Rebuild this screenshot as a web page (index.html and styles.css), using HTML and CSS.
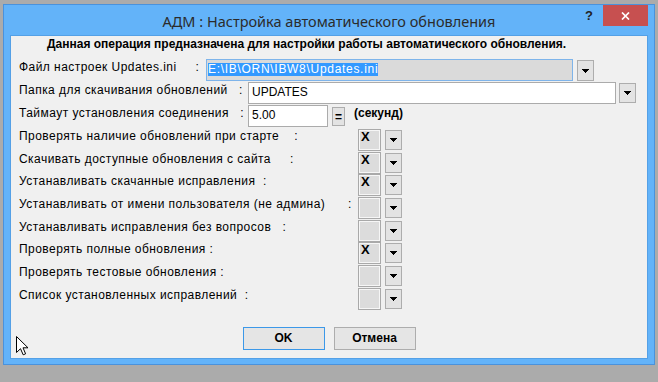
FILE: index.html
```html
<!DOCTYPE html>
<html>
<head>
    <title>АДМ : Настройка автоматического обновления</title>
    <link rel="stylesheet" href="styles.css">
</head>
<body>
    <div class="window">
        <div class="titlebar">
            <span></span>
            <span class="title">АДМ : Настройка автоматического обновления</span>
            <div class="caption">
                <span class="help">?</span>
                <span class="close">
                    <svg width="9" height="8" viewBox="0 0 9 8"><path d="M1 0.5 L8 7.5 M8 0.5 L1 7.5" stroke="#fff" stroke-width="1.7"/></svg>
                </span>
            </div>
        </div>

        <div class="client">
            <p class="intro">Данная операция предназначена для настройки работы автоматического обновления.</p>

            <div class="form">
                <div class="row">
                    <label class="label label-file">Файл настроек Updates.ini     :</label>
                    <div class="field field-file"><span class="selected">E:\IB\ORN\IBW8\Updates.ini</span></div>
                    <button class="drop drop-file"><svg width="7" height="4" viewBox="0 0 7 4"><path d="M0 0h7v1h-1v1h-1v1h-1v1h-1v-1h-1v-1h-1v-1h-1z"/></svg></button>
                </div>
                <div class="row">
                    <label class="label">Папка для скачивания обновлений   :</label>
                    <div class="field field-folder">UPDATES</div>
                    <button class="drop drop-folder"><svg width="7" height="4" viewBox="0 0 7 4"><path d="M0 0h7v1h-1v1h-1v1h-1v1h-1v-1h-1v-1h-1v-1h-1z"/></svg></button>
                </div>
                <div class="row">
                    <label class="label">Таймаут установления соединения   :</label>
                    <div class="field field-timeout">5.00</div>
                    <button class="calc">=</button>
                    <span class="unit">(секунд)</span>
                </div>

                <div class="checks">
                    <label class="check-label">Проверять наличие обновлений при старте    :</label>
                    <div class="box">X</div>
                    <button class="drop"><svg width="7" height="4" viewBox="0 0 7 4"><path d="M0 0h7v1h-1v1h-1v1h-1v1h-1v-1h-1v-1h-1v-1h-1z"/></svg></button>

                    <label class="check-label">Скачивать доступные обновления с сайта     :</label>
                    <div class="box">X</div>
                    <button class="drop"><svg width="7" height="4" viewBox="0 0 7 4"><path d="M0 0h7v1h-1v1h-1v1h-1v1h-1v-1h-1v-1h-1v-1h-1z"/></svg></button>

                    <label class="check-label">Устанавливать скачанные исправления  :</label>
                    <div class="box">X</div>
                    <button class="drop"><svg width="7" height="4" viewBox="0 0 7 4"><path d="M0 0h7v1h-1v1h-1v1h-1v1h-1v-1h-1v-1h-1v-1h-1z"/></svg></button>

                    <label class="check-label">Устанавливать от имени пользователя (не админа)      :</label>
                    <div class="box"></div>
                    <button class="drop"><svg width="7" height="4" viewBox="0 0 7 4"><path d="M0 0h7v1h-1v1h-1v1h-1v1h-1v-1h-1v-1h-1v-1h-1z"/></svg></button>

                    <label class="check-label">Устанавливать исправления без вопросов   :</label>
                    <div class="box"></div>
                    <button class="drop"><svg width="7" height="4" viewBox="0 0 7 4"><path d="M0 0h7v1h-1v1h-1v1h-1v1h-1v-1h-1v-1h-1v-1h-1z"/></svg></button>

                    <label class="check-label">Проверять полные обновления :</label>
                    <div class="box">X</div>
                    <button class="drop"><svg width="7" height="4" viewBox="0 0 7 4"><path d="M0 0h7v1h-1v1h-1v1h-1v1h-1v-1h-1v-1h-1v-1h-1z"/></svg></button>

                    <label class="check-label">Проверять тестовые обновления :</label>
                    <div class="box"></div>
                    <button class="drop"><svg width="7" height="4" viewBox="0 0 7 4"><path d="M0 0h7v1h-1v1h-1v1h-1v1h-1v-1h-1v-1h-1v-1h-1z"/></svg></button>

                    <label class="check-label">Список установленных исправлений  :</label>
                    <div class="box"></div>
                    <button class="drop"><svg width="7" height="4" viewBox="0 0 7 4"><path d="M0 0h7v1h-1v1h-1v1h-1v1h-1v-1h-1v-1h-1v-1h-1z"/></svg></button>
                </div>
            </div>

            <div class="actions">
                <button class="btn btn-default">OK</button>
                <button class="btn">Отмена</button>
            </div>

            <svg class="cursor" width="13" height="20" viewBox="0 0 13 20">
                <path d="M0.5 0.5 V16.5 L4.5 12.7 L7.2 18.8 L9.6 17.8 L7 11.8 H12 Z" fill="#fff" stroke="#000" stroke-width="1"/>
            </svg>
        </div>
    </div>
</body>
</html>
```

FILE: styles.css
```css
body {
    margin: 0;
    background-color: #ababab;
    font-family: "Liberation Sans", Arial, sans-serif;
    font-size: 12px;
    color: #000;
}

.window {
    width: 652px;
    margin: 4px 0 0 3px;
    box-sizing: border-box;
    background-color: #63b3f9;
    border: 1px solid #4a92dc;
    padding: 0 6px 5px 6px;
}

/* title bar */
.titlebar {
    display: grid;
    grid-template-columns: 1fr auto 1fr;
    height: 30px;
}

.title {
    font-family: "Noto Sans", sans-serif;
    font-size: 14.5px;
    line-height: 20px;
    color: #2b2b2b;
    margin-top: 6px;
    white-space: nowrap;
}

.caption {
    justify-self: end;
    display: flex;
    align-items: flex-start;
}

.help {
    font-weight: bold;
    font-size: 13px;
    line-height: 14px;
    color: #222;
    margin: 4px 10px 0 0;
}

.close {
    width: 45px;
    height: 21px;
    background-color: #c75050;
    display: flex;
    align-items: center;
    justify-content: center;
}

/* client area */
.client {
    position: relative;
    height: 322px;
    background-color: #f0f0f0;
    border: 1px solid #54a0e6;
}

.intro {
    margin: 1px 0 0 0;
    padding-left: 36px;
    font-weight: bold;
    line-height: 14px;
}

.form {
    margin-top: 8px;
    padding-left: 8px;
}

.row {
    display: flex;
    align-items: flex-start;
    height: 22px;
    margin-bottom: 1px;
}

.label,
.check-label {
    white-space: pre;
    line-height: 14px;
    letter-spacing: 0.45px;
}

.label {
    width: 229px;
    padding-top: 1px;
}

.label-file {
    width: 187px;
}

.field {
    box-sizing: border-box;
    height: 22px;
    border: 1px solid #ababab;
    background-color: #fff;
    padding: 2px 0 0 3px;
    line-height: 14px;
}

.field-file {
    width: 367px;
    background-color: #dadada;
    border-color: #7eb4ea;
    padding: 2px 0 0 1px;
}

.selected {
    display: inline-block;
    line-height: 13px;
    background-color: #3399ff;
    color: #fff;
    letter-spacing: 0.7px;
}

.field-folder {
    width: 368px;
}

.field-timeout {
    width: 80px;
}

.drop,
.calc {
    box-sizing: border-box;
    padding: 0;
    border: 1px solid #adadad;
    background-color: #e3e3e3;
    display: flex;
    align-items: center;
    justify-content: center;
}

.drop {
    width: 17px;
    height: 20px;
}

.drop-file {
    height: 21px;
    margin: 1px 0 0 4px;
}

.drop-folder {
    margin: 1px 0 0 3px;
}

.calc {
    width: 13px;
    height: 19px;
    margin: 2px 0 0 4px;
    font-family: "Liberation Sans", Arial, sans-serif;
    font-weight: bold;
    font-size: 12px;
}

.unit {
    margin-left: 9px;
    padding-top: 1px;
    line-height: 14px;
    font-weight: bold;
}

/* option rows */
.checks {
    margin-top: 2px;
    display: grid;
    grid-template-columns: 335px 23px 17px;
    grid-auto-rows: 22px;
    column-gap: 4px;
    row-gap: 0.7px;
    align-items: center;
}

.check-label {
    align-self: start;
}

.box {
    box-sizing: border-box;
    height: 22px;
    border: 1px solid #a9a9a9;
    box-shadow: inset 0 0 0 1px #f6f6f6;
    background-color: #dcdcdc;
    padding-left: 2px;
    font-weight: bold;
    font-size: 13px;
    line-height: 14px;
}

/* buttons */
.actions {
    margin-top: 17px;
    display: flex;
    justify-content: center;
    gap: 9px;
}

.btn {
    width: 82px;
    height: 23px;
    border: 1px solid #adadad;
    background-color: #e5e5e5;
    font-family: "Liberation Sans", Arial, sans-serif;
    font-weight: bold;
    font-size: 12px;
    color: #000;
    padding: 0;
}

.btn-default {
    border-color: #3c98e8;
}

.cursor {
    position: absolute;
    left: 5px;
    top: 300px;
}
```
